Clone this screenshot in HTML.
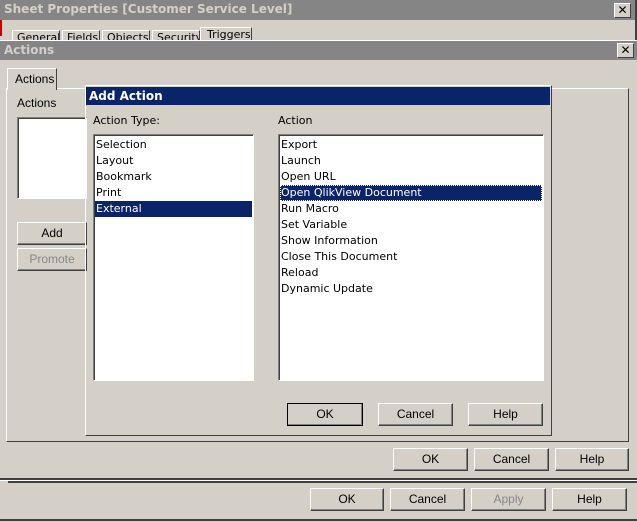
<!DOCTYPE html>
<html><head><style>
*{box-sizing:border-box;margin:0;padding:0}
body{width:637px;height:522px;background:#d4d0c8;position:relative;overflow:hidden;font-family:"DejaVu Sans","Liberation Sans",sans-serif;font-size:11px;color:#000}
.a{position:absolute}
.title{background:#858585;color:#d4d0c8;font-weight:bold;font-size:12px;padding-left:4px;line-height:19px}
.btn{position:absolute;background:#d4d0c8;border:1px solid;border-color:#fff #404040 #404040 #fff;box-shadow:inset -1px -1px 0 #808080;text-align:center;line-height:20px;font-family:"Liberation Sans",sans-serif;font-size:12px}
.xb{position:absolute;width:17px;height:15px;background:#d4d0c8;border:1px solid;border-color:#fff #404040 #404040 #fff;font-size:12px;font-weight:bold;line-height:12px;text-align:center}
.list{position:absolute;background:#fff;border:1px solid;border-color:#808080 #fff #fff #808080;box-shadow:inset 1px 1px 0 #404040}
.list div{height:16px;line-height:16px;padding-left:1px;white-space:nowrap}
.sel{background:#0a246a;color:#fff}
.raised{border:1px solid;border-color:#fff #404040 #404040 #fff}
</style></head><body>
<div class="a title" style="left:0;top:0;width:635px;height:20px">Sheet Properties [Customer Service Level]</div>
<div class="xb" style="left:614px;top:3px">✕</div>
<div class="a" style="left:635px;top:0;width:2px;height:40px;background:#404040"></div>
<div class="a" style="left:0;top:20px;width:2px;height:16px;background:#c00"></div>
<div class="a raised" style="left:12px;top:30px;width:48px;height:14px;border-bottom:none;overflow:hidden;padding-left:4px;line-height:14px">General</div>
<div class="a raised" style="left:62px;top:30px;width:38px;height:14px;border-bottom:none;overflow:hidden;padding-left:4px;line-height:14px">Fields</div>
<div class="a raised" style="left:102px;top:30px;width:48px;height:14px;border-bottom:none;overflow:hidden;padding-left:4px;line-height:14px">Objects</div>
<div class="a raised" style="left:152px;top:30px;width:48px;height:14px;border-bottom:none;overflow:hidden;padding-left:4px;line-height:14px">Security</div>
<div class="a raised" style="left:200px;top:27px;width:52px;height:16px;border-bottom:none;overflow:hidden;padding-left:6px;line-height:14px">Triggers</div>
<div class="a" style="left:0;top:40px;width:637px;height:1px;background:#fff"></div>
<div class="a title" style="left:0;top:41px;width:637px;height:19px;line-height:19px">Actions</div>
<div class="xb" style="left:617px;top:43px">✕</div>
<div class="a raised" style="left:6px;top:88px;width:623px;height:354px"></div>
<div class="a raised" style="left:7px;top:68px;width:50px;height:22px;border-bottom:none;background:#d4d0c8;padding-left:7px;line-height:20px;font-family:'Liberation Sans',sans-serif;font-size:12px">Actions</div>
<div class="a" style="left:17px;top:96px;font-family:'Liberation Sans',sans-serif;font-size:12px">Actions</div>
<div class="list" style="left:17px;top:117px;width:70px;height:82px"></div>
<div class="btn" style="left:17px;top:222px;width:70px;height:23px">Add</div>
<div class="btn" style="left:17px;top:248px;width:70px;height:23px;color:#888">Promote</div>
<div class="a raised" style="left:85px;top:85px;width:467px;height:351px"></div>
<div class="a" style="left:86px;top:87px;width:464px;height:18px;background:#0a246a;color:#fff;font-weight:bold;font-size:12px;line-height:18px;padding-left:3px">Add Action</div>
<div class="a" style="left:93px;top:114px">Action Type:</div>
<div class="a" style="left:278px;top:114px">Action</div>
<div class="list" style="left:93px;top:134px;width:161px;height:247px;padding:2px 1px">
<div>Selection</div><div>Layout</div><div>Bookmark</div><div>Print</div><div class="sel">External</div></div>
<div class="list" style="left:278px;top:134px;width:266px;height:247px;padding:2px 1px">
<div>Export</div><div>Launch</div><div>Open URL</div><div class="sel" style="outline:1px dotted #fff;outline-offset:-1px">Open QlikView Document</div><div>Run Macro</div><div>Set Variable</div><div>Show Information</div><div>Close This Document</div><div>Reload</div><div>Dynamic Update</div></div>
<div class="btn" style="left:287px;top:403px;width:76px;height:23px;border:1px solid #000">OK</div>
<div class="btn" style="left:378px;top:403px;width:75px;height:23px">Cancel</div>
<div class="btn" style="left:468px;top:403px;width:75px;height:23px">Help</div>
<div class="btn" style="left:393px;top:448px;width:75px;height:23px">OK</div>
<div class="btn" style="left:474px;top:448px;width:75px;height:23px">Cancel</div>
<div class="btn" style="left:555px;top:448px;width:74px;height:23px">Help</div>
<div class="a" style="left:0;top:478px;width:637px;height:2px;background:#404040"></div>
<div class="a" style="left:0;top:480px;width:637px;height:1px;background:#fff"></div>
<div class="a" style="left:8px;top:481px;width:629px;height:2px;background:#404040"></div>
<div class="btn" style="left:310px;top:488px;width:74px;height:23px">OK</div>
<div class="btn" style="left:390px;top:488px;width:75px;height:23px">Cancel</div>
<div class="btn" style="left:471px;top:488px;width:75px;height:23px;color:#888">Apply</div>
<div class="btn" style="left:552px;top:488px;width:75px;height:23px">Help</div>
<div class="a" style="left:0;top:519px;width:637px;height:2px;background:#404040"></div>
</body></html>
